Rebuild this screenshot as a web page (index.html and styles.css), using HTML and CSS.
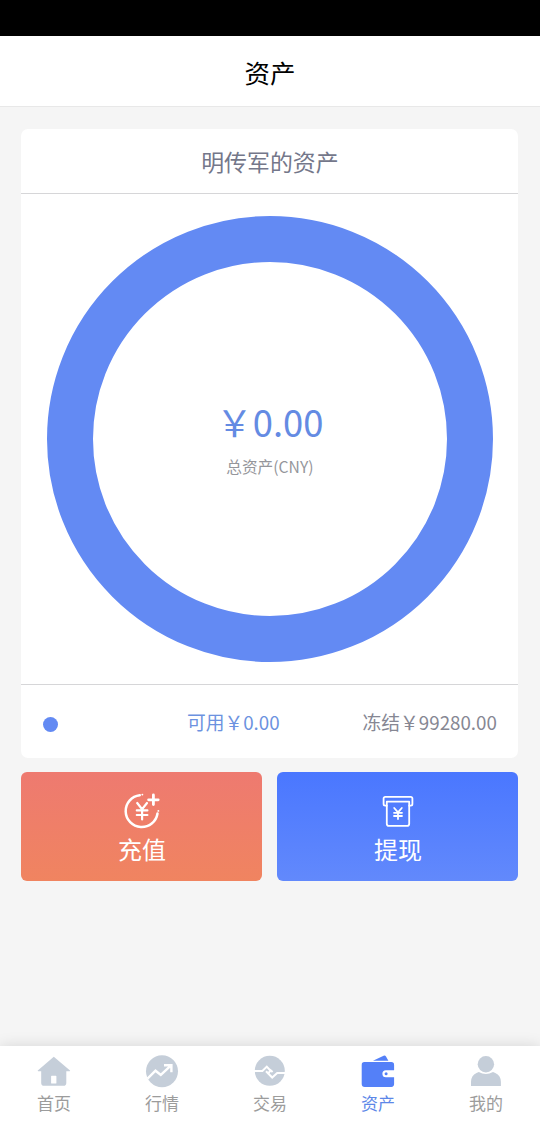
FILE: index.html
```html
<!DOCTYPE html>
<html lang="zh-CN">
<head>
<meta charset="utf-8">
<title>资产</title>
<link rel="stylesheet" href="styles.css">
</head>
<body>
<div class="app">
  <div class="status-bar"></div>
  <header class="header">资产</header>
  <main class="content">
    <section class="card">
      <h2 class="card-title">明传军的资产</h2>
      <div class="chart">
        <div class="ring">
          <div class="total">￥0.00</div>
          <div class="total-label">总资产(CNY)</div>
        </div>
      </div>
      <div class="legend">
        <span class="dot"></span>
        <span class="available">可用￥0.00</span>
        <span class="frozen">冻结￥99280.00</span>
      </div>
    </section>
    <div class="actions">
      <button class="action deposit">
        <svg width="40" height="40" viewBox="122 791 40 40" fill="none" stroke="#fff" stroke-width="2.5" stroke-linecap="round">
          <path d="M139.8 795.2A16 16 0 1 0 157.5 813.5"/>
          <path d="M142.3 794.6h.1M158.3 810.9h.1" stroke-width="1.8"/>
          <path d="M153.4 795v9.6M148.6 799.8h9.6" stroke-width="2.8"/>
          <path d="M137.2 803l4.9 6.2 4.9-6.2M142.1 809.2v10.2M136.8 810.4h10.6M136.8 815h10.6" stroke-width="2.2"/>
        </svg>
        <span>充值</span>
      </button>
      <button class="action withdraw">
        <svg width="40" height="40" viewBox="378 791 40 40" fill="none" stroke="#fff" stroke-width="1.8" stroke-linecap="round" stroke-linejoin="round">
          <path d="M386.8 805.7h-1.6a1.6 1.6 0 0 1-1.6-1.6v-5.7a1.6 1.6 0 0 1 1.6-1.6h25.6a1.6 1.6 0 0 1 1.6 1.6v5.7a1.6 1.6 0 0 1-1.6 1.6h-1.6"/>
          <path d="M386.8 801.7h22.4v22a2.2 2.2 0 0 1-2.2 2.2h-18a2.2 2.2 0 0 1-2.2-2.2z"/>
          <path d="M394.2 808l3.8 4.3 3.8-4.3M398 812.3v6.7M394 812.8h8M394 816h8" stroke-width="1.8"/>
        </svg>
        <span>提现</span>
      </button>
    </div>
  </main>
  <nav class="tabs">
    <a class="tab">
      <svg width="36" height="36" viewBox="36 1053 36 36">
        <path fill="#c5ced9" d="M53.8 1056.8L70 1070.6q.5.7-.4.7h-3.3v11.6a2.8 2.8 0 0 1-2.8 2.8H44a2.8 2.8 0 0 1-2.8-2.8v-11.6h-3q-.9 0-.4-.7z"/>
        <rect x="51.1" y="1075.8" width="5.3" height="7.8" rx=".6" fill="#fff"/>
      </svg>
      <span>首页</span>
    </a>
    <a class="tab">
      <svg width="36" height="36" viewBox="144 1053 36 36">
        <circle cx="162" cy="1071.2" r="16" fill="#c5ced9"/>
        <path d="M147.5 1078.6l8-7.9 5.3 4.3 10.5-9.8M164 1065.3h7.4v6.9" fill="none" stroke="#fff" stroke-width="2.4"/>
      </svg>
      <span>行情</span>
    </a>
    <a class="tab">
      <svg width="36" height="36" viewBox="252 1053 36 36">
        <circle cx="269.8" cy="1070.8" r="15" fill="#c5ced9"/>
        <path d="M254 1071h8.4l4.4-4.4 3.6 4-1.7 2.2M285.5 1073h-8.3l-5 4.5-6.2-6.3M269.8 1069.4l2.8 2.6" fill="none" stroke="#fff" stroke-width="2"/>
      </svg>
      <span>交易</span>
    </a>
    <a class="tab active">
      <svg width="36" height="36" viewBox="360 1053 36 36">
        <path fill="#5480f8" d="M373 1060.7l10.6-5q1.6-.6 2.4.8l2.4 4.2zM364.7 1062.1h26.6a2.8 2.8 0 0 1 2.8 2.8v5.4h-8.2a3.5 3.5 0 0 0 0 7h8.2v6.8a2.8 2.8 0 0 1-2.8 2.8h-26.6a3 3 0 0 1-3-3v-19a2.8 2.8 0 0 1 3-2.8z"/>
        <circle cx="386.1" cy="1073.8" r="1.5" fill="#5480f8"/>
      </svg>
      <span>资产</span>
    </a>
    <a class="tab">
      <svg width="36" height="36" viewBox="468 1053 36 36" fill="#c5ced9">
        <circle cx="485.9" cy="1064.2" r="8.2"/>
        <path d="M471 1086v-4.2q0-6 5.5-8.8l2.3-1.1q7 4.3 14.2 0l2.3 1.1q5.6 2.8 5.6 8.8v4.2z"/>
      </svg>
      <span>我的</span>
    </a>
  </nav>
</div>
</body>
</html>
```
FILE: styles.css
```css
* { box-sizing: border-box; }
body {
  margin: 0;
  font-family: "Noto Sans CJK SC", sans-serif;
  font-weight: 400;
  background: #f5f5f5;
}
svg { display: block; }
.app { display: flex; flex-direction: column; height: 1122px; overflow: hidden; }
.status-bar { height: 36px; background: #000; flex: none; }
.header {
  height: 71px;
  flex: none;
  background: #fff;
  border-bottom: 1px solid #e8e8e8;
  font-size: 25.5px;
  line-height: 72px;
  text-align: center;
  color: #000;
}
.content { flex: 1; padding: 22px 21.6px 0 21.4px; }
.card { height: 629px; background: #fff; border-radius: 7px; }
.card-title {
  margin: 0;
  height: 65px;
  border-bottom: 1px solid #d6d6d8;
  font-size: 22.9px;
  font-weight: inherit;
  line-height: 65px;
  text-align: center;
  color: #74778a;
}
.chart {
  height: 491px;
  display: flex;
  align-items: center;
  justify-content: center;
  border-bottom: 1px solid #d6d6d8;
}
.ring {
  width: 446px;
  height: 446px;
  border: 46.5px solid #638af3;
  border-radius: 50%;
  padding-top: 132px;
  text-align: center;
}
.total { font-size: 36.4px; line-height: 54px; color: #648be3; }
.total-label { margin-top: 7px; font-size: 15.7px; line-height: 24px; color: #95969b; }
.legend {
  height: 73px;
  padding: 0 21.5px;
  display: flex;
  align-items: center;
  justify-content: space-between;
  font-size: 18.75px;
  line-height: 28px;
  color: #868793;
}
.dot { width: 15px; height: 15px; margin-top: 5px; border-radius: 50%; background: #638af3; }
.available { margin: 1px 0 0 46px; color: #6c92e0; }
.frozen { margin-top: 1px; }
.actions { display: flex; gap: 15px; margin-top: 14px; }
.action {
  flex: 1;
  height: 109px;
  padding: 19px 0 0;
  border: 0;
  border-radius: 6px;
  display: flex;
  flex-direction: column;
  align-items: center;
  font: inherit;
  font-size: 24px;
  line-height: 36px;
  color: #fff;
}
.deposit { background: linear-gradient(#ee7a70, #f08460); }
.withdraw { background: linear-gradient(#4a77ff, #6289fc); }
.tabs {
  height: 76px;
  flex: none;
  display: flex;
  background: #fff;
  box-shadow: 0 0 14px rgba(0, 0, 0, .13);
}
.tab {
  flex: 1;
  padding-top: 7px;
  display: flex;
  flex-direction: column;
  align-items: center;
  font-size: 17px;
  line-height: 27px;
  color: #9c9c9c;
}
.active { color: #5c87e8; }
```
